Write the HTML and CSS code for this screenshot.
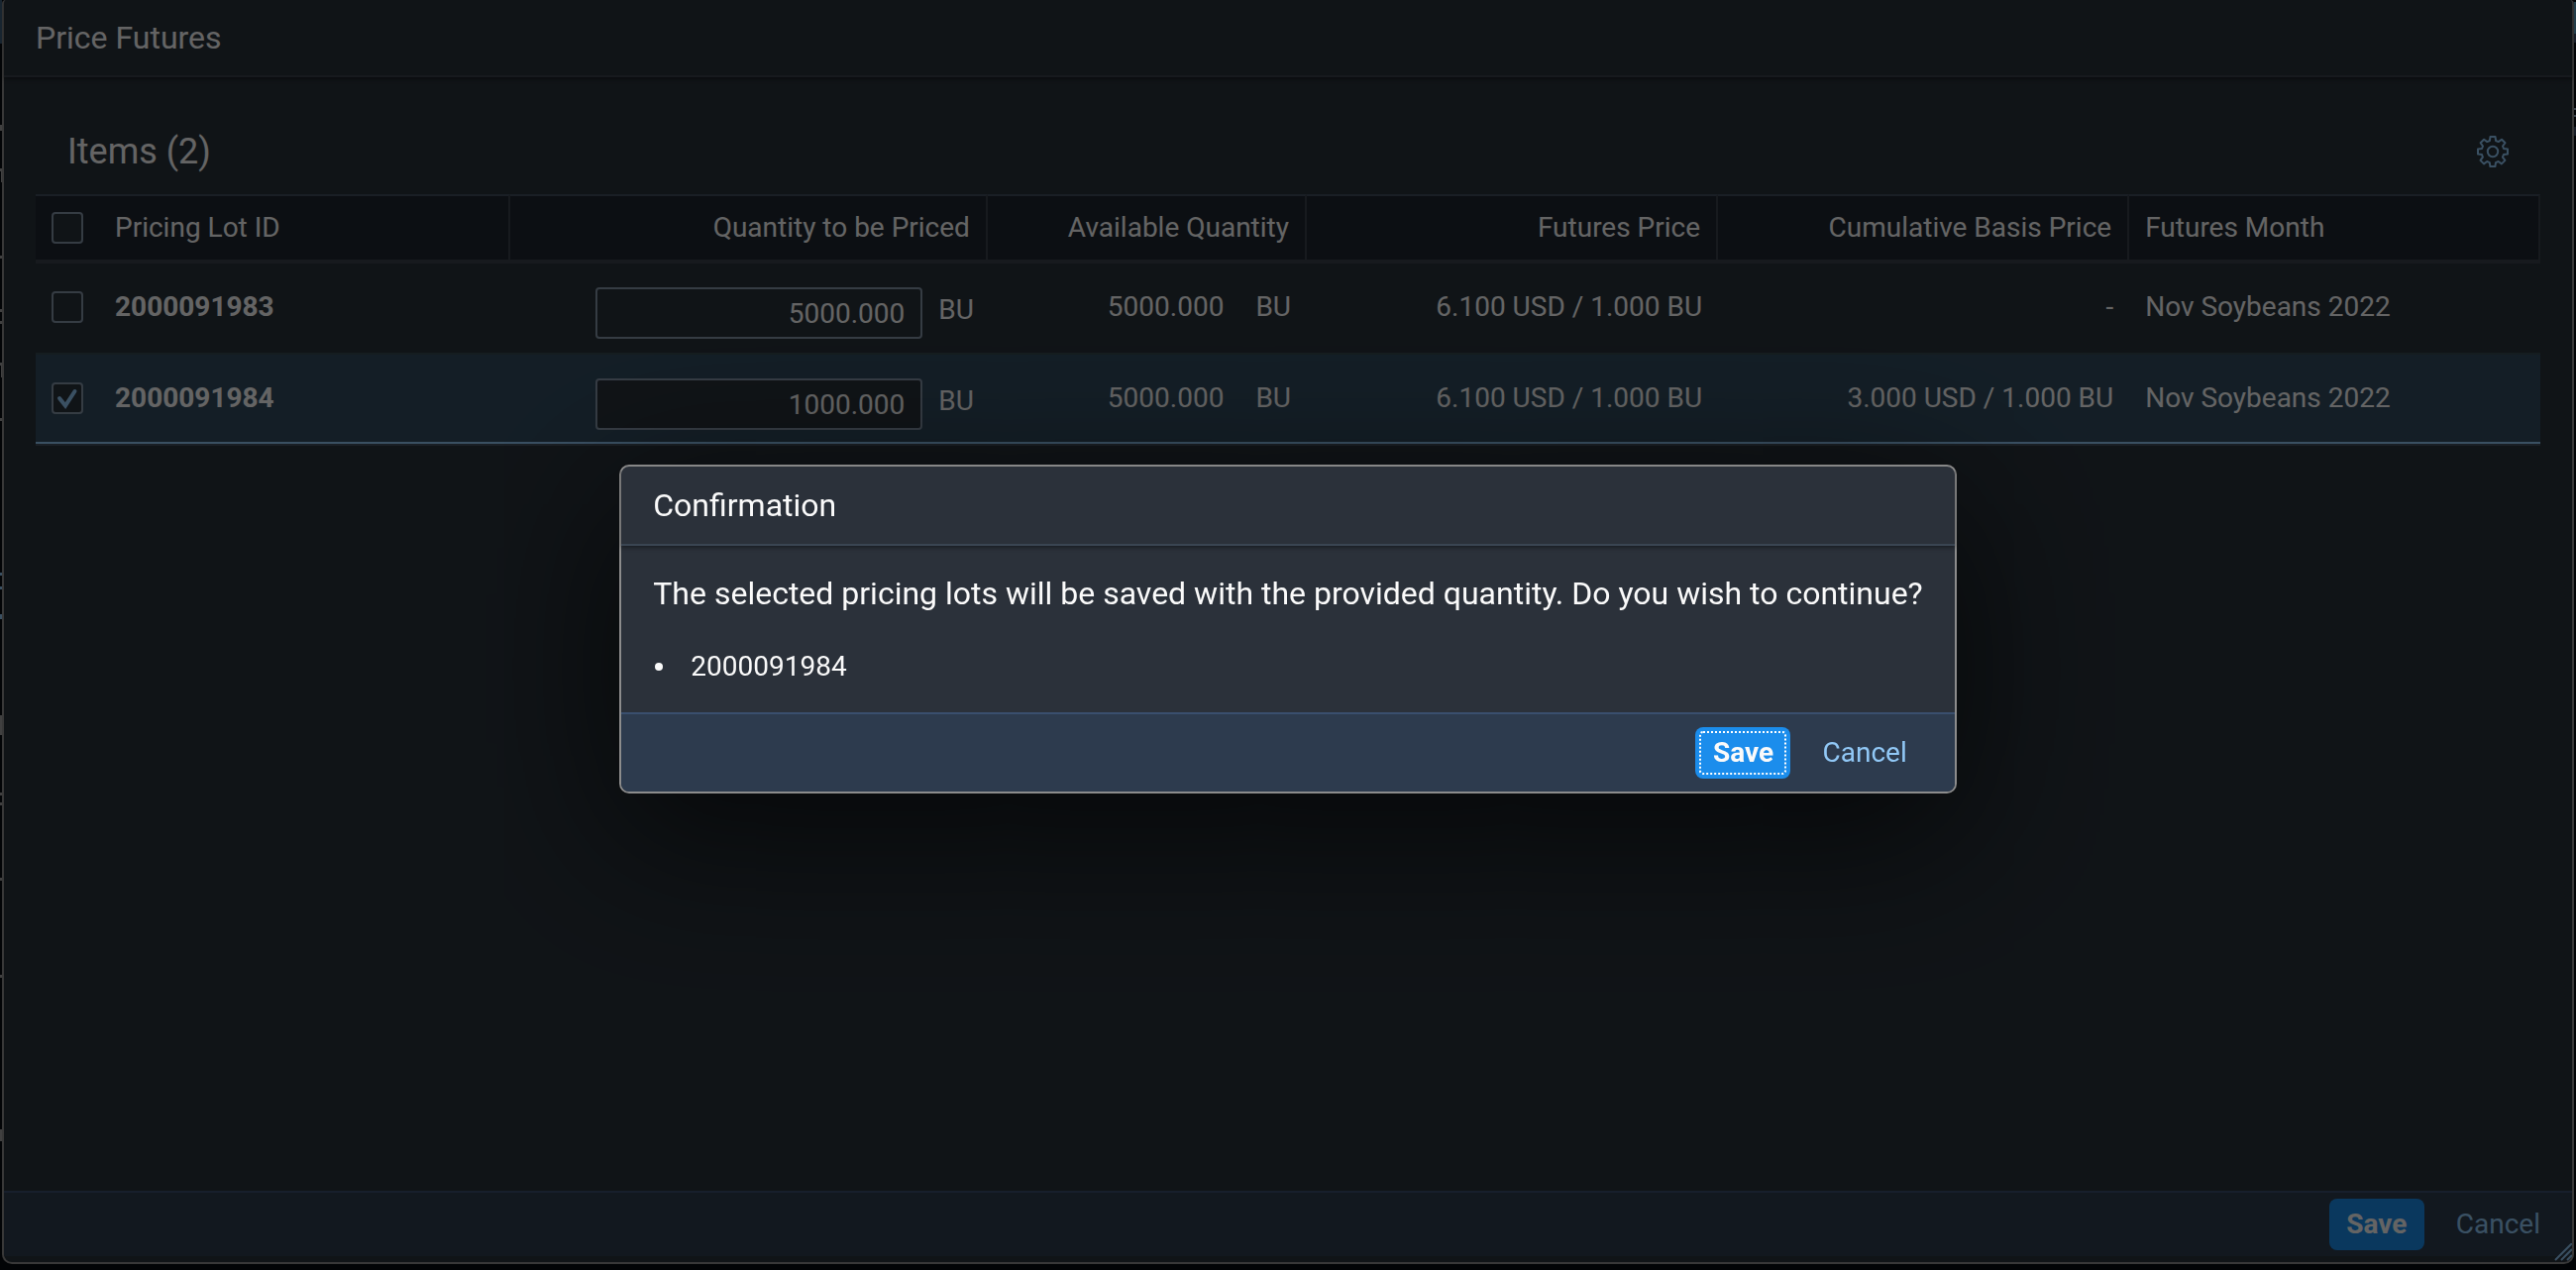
FILE: index.html
```html
<!DOCTYPE html>
<html lang="en">
<head>
<meta charset="utf-8">
<title>Price Futures</title>
<link rel="stylesheet" href="styles.css">
</head>
<body>
<svg class="edge edge-left" viewBox="0 0 2 1282" preserveAspectRatio="none" aria-hidden="true">
  <path fill="#3d5c78" d="M0 0h2v44H0z"/>
  <path fill="#a0a0a0" d="M0 126h2v6H0zM0 170h2v3H0zM1 173h1v11H1zM0 258h2v3H0zM0 312h2v3H0zM0 324h2v3H0zM0 366h2v3H0zM1 369h1v12H1zM0 422h2v3H0zM0 722h2v20H0zM0 800h2v3H0zM0 810h2v3H0zM0 886h2v3H0zM0 984h2v3H0zM0 1140h2v12H0z"/>
  <path fill="#91c8f6" d="M0 578h2v3H0zM0 592h2v3H0zM0 620h2v5H0z"/>
</svg>
<svg class="edge edge-right" viewBox="0 0 2 1282" preserveAspectRatio="none" aria-hidden="true">
  <path fill="#5a9bb8" d="M0 2h2v32H0z"/>
  <path fill="#3d4c64" d="M0 34h2v9H0zM0 128h2v9H0z"/>
  <path fill="#91a8bc" d="M0 109h2v2H0zM0 116h2v2H0z"/>
</svg>

<main class="sheet">
  <header class="sheet-header"><h1>Price Futures</h1></header>

  <section class="sheet-body">
    <div class="toolbar">
      <h2>Items (2)</h2>
      <button class="icon-button" type="button" aria-label="Settings">
        <svg viewBox="0 0 32 32" width="32" height="32" fill="none" stroke="currentColor" stroke-width="2" stroke-linejoin="round">
          <path d="M13.5 1h5l.6 4 2.6 1.100 3.300-2.400 3.500 3.500-2.500 3.300L27 13l4 .6v4.800l-4 .6-1.100 2.600 2.500 3.300-3.500 3.500-3.300-2.400-2.600 1.100-.6 3.900h-5l-.6-3.900-2.600-1.100-3.200 2.400-3.500-3.500 2.400-3.300L5 19l-4-.6v-4.800l4-.6 1-2.500-2.400-3.300L7.100 3.700l3.200 2.400L12.900 5z"/>
          <circle cx="16" cy="16" r="5.200"/>
        </svg>
      </button>
    </div>

    <table class="lots">
      <colgroup>
        <col class="col-select"><col class="col-wide"><col class="col-quantity"><col class="col-available"><col class="col-wide"><col class="col-wide"><col>
      </colgroup>
      <thead>
        <tr>
          <th class="select plain"><span class="tick"><input type="checkbox" aria-label="Select all"></span></th>
          <th scope="col">Pricing Lot ID</th>
          <th scope="col" class="num">Quantity to be Priced</th>
          <th scope="col" class="num">Available Quantity</th>
          <th scope="col" class="num">Futures Price</th>
          <th scope="col" class="num">Cumulative Basis Price</th>
          <th scope="col">Futures Month</th>
        </tr>
      </thead>
      <tbody>
        <tr>
          <td class="select"><span class="tick"><input type="checkbox" aria-label="Select 2000091983"></span></td>
          <td class="lot-id">2000091983</td>
          <td class="entry"><div class="field"><input id="q1" type="text" value="5000.000" aria-label="Quantity to be priced for 2000091983"><label for="q1">BU</label></div></td>
          <td class="num"><div class="measure"><span>5000.000</span><span>BU</span></div></td>
          <td class="num">6.100 USD / 1.000 BU</td>
          <td class="num">-</td>
          <td>Nov Soybeans 2022</td>
        </tr>
        <tr class="selected">
          <td class="select"><span class="tick"><input type="checkbox" checked aria-label="Select 2000091984"><svg viewBox="0 0 32 32" width="32" height="32" aria-hidden="true"><path d="M8 16l6 7.500L23.500 9" fill="none" stroke="currentColor" stroke-width="4" stroke-linecap="round"/></svg></span></td>
          <td class="lot-id">2000091984</td>
          <td class="entry"><div class="field"><input id="q2" type="text" value="1000.000" aria-label="Quantity to be priced for 2000091984"><label for="q2">BU</label></div></td>
          <td class="num"><div class="measure"><span>5000.000</span><span>BU</span></div></td>
          <td class="num">6.100 USD / 1.000 BU</td>
          <td class="num">3.000 USD / 1.000 BU</td>
          <td>Nov Soybeans 2022</td>
        </tr>
      </tbody>
    </table>
  </section>

  <footer class="sheet-footer">
    <button class="button primary" type="button">Save</button>
    <button class="button" type="button">Cancel</button>
    <svg class="grip" viewBox="0 0 18 18" width="18" height="18" fill="none" stroke="currentColor" stroke-width="2" aria-hidden="true"><path d="M1 17L18 0M7 17L18 6M13 17l5-5"/></svg>
  </footer>
</main>

<div class="scrim">
  <section class="confirm" role="dialog" aria-modal="true" aria-labelledby="confirm-title">
    <header class="confirm-header"><h2 id="confirm-title">Confirmation</h2></header>
    <div class="confirm-body">
      <p>The selected pricing lots will be saved with the provided quantity. Do you wish to continue?</p>
      <ul><li>2000091984</li></ul>
    </div>
    <footer class="confirm-footer">
      <button class="button primary focused" type="button">Save</button>
      <button class="button" type="button">Cancel</button>
    </footer>
  </section>
</div>
</body>
</html>
```
FILE: styles.css
```css
:root {
  --surface: #29323a;
  --text: #fafafa;
  --link: #91c8f6;
  --accent: #1b8dec;
  --field-border: #8696a9;
  --line: #3b434d;
  --frame: #8c8c8c;
  --bar: #2d3b4e;
  --bar-line: #3a4f6e;
}

* { box-sizing: border-box; }

body {
  margin: 0;
  min-height: 100vh;
  background: #060b10;
  color: var(--text);
  font-family: Roboto, "Liberation Sans", sans-serif;
  font-size: 28px;
  line-height: 36px;
  overflow: hidden;
}

h1, h2, p, ul { margin: 0; padding: 0; }
h1, h2 { font-size: 32px; font-weight: 400; line-height: 40px; }

.edge { position: absolute; top: 0; width: 2px; height: 100%; }
.edge-left { left: 0; }
.edge-right { right: 0; }

/* Full-screen dialog */
.sheet {
  display: flex;
  flex-direction: column;
  height: calc(100vh - 6px);
  margin: 0 2px;
  padding-bottom: 6px;
  border: 2px solid var(--frame);
  border-top: 0;
  border-radius: 4px 4px 10px 10px;
  background: var(--surface);
}

.sheet-header {
  display: flex;
  align-items: center;
  height: 78px;
  padding: 0 32px;
  border-bottom: 2px solid var(--line);
  box-shadow: 0 2px 4px rgba(0, 0, 0, .4);
}

.sheet-body { flex: 1; padding: 32px 32px 0; }

.toolbar {
  display: flex;
  align-items: center;
  justify-content: space-between;
  height: 86px;
  padding: 0 32px;
}
.toolbar h2 { font-size: 36px; }

.icon-button {
  display: flex;
  padding: 0;
  border: 0;
  background: none;
  color: var(--link);
}

/* Pricing lots */
.lots {
  width: 100%;
  table-layout: fixed;
  border-collapse: separate;
  border-spacing: 0;
  border-bottom: 2px solid #434f5c;
}
.col-select { width: 64px; }
.col-wide { width: 16.42%; }
.col-quantity { width: 19.06%; }
.col-available { width: 12.74%; }

.lots th, .lots td { padding: 0 16px; text-align: left; font-weight: 400; white-space: nowrap; }
.lots th {
  height: 68px;
  background: #202731;
  border: solid var(--line);
  border-width: 2px 2px 2px 0;
  border-top-color: #434f5c;
}
.lots th.plain { border-right: 0; }
.lots td { height: 92px; border: solid transparent; border-width: 2px 0; }
.lots tbody tr:first-child td { border-top-color: var(--line); }
.lots .num { text-align: right; }
.lots .lot-id { font-weight: 700; }
.lots .selected td { background: #324c60; border-top-color: #364a50; border-bottom-color: var(--link); }

.tick { display: grid; width: 32px; height: 32px; }
.tick > * { grid-area: 1 / 1; }
.tick input {
  appearance: none;
  width: 32px;
  height: 32px;
  margin: 0;
  border: 2px solid var(--field-border);
  border-radius: 4px;
  background: var(--surface);
}
.tick svg { color: var(--link); pointer-events: none; }

.lots .entry { padding: 24px 14px 12px 16px; }
.field { display: flex; justify-content: flex-end; gap: 16px; }
.field input {
  width: 330px;
  height: 52px;
  padding: 0 16px;
  border: 2px solid var(--field-border);
  border-radius: 4px;
  background: var(--surface);
  color: inherit;
  font: inherit;
  text-align: right;
}
.field label { line-height: 46px; }

.measure { display: flex; justify-content: flex-end; gap: 32px; }

/* Buttons */
.button {
  height: 52px;
  padding: 0 16px;
  border: 0;
  border-radius: 8px;
  background: none;
  color: var(--link);
  font: inherit;
}
.button.primary {
  min-width: 96px;
  background: var(--accent);
  color: var(--text);
  font-weight: 700;
}
.button.focused { outline: 2px dotted #fff; outline-offset: -6px; }

.sheet-footer {
  position: relative;
  display: flex;
  align-items: center;
  justify-content: flex-end;
  gap: 16px;
  height: 66px;
  padding: 0 16px;
  border-top: 2px solid var(--bar-line);
  background: #2d3e4f;
}
.grip { position: absolute; right: 0; bottom: -5px; color: var(--link); }

/* Confirmation dialog */
.scrim {
  position: fixed;
  inset: 0;
  display: flex;
  align-items: center;
  justify-content: center;
  padding-bottom: 12px;
  background: rgba(0, 0, 0, .6);
}

.confirm {
  border: 2px solid var(--frame);
  border-radius: 10px;
  background: #2b313a;
  box-shadow: 0 40px 160px rgba(0, 0, 0, .7);
}
.confirm-header {
  display: flex;
  align-items: center;
  height: 80px;
  padding: 0 32px;
  border-bottom: 2px solid #3a4552;
  box-shadow: 0 2px 4px rgba(0, 0, 0, .4);
}
.confirm-body { padding: 30px 32px 26px; }
.confirm-body p { font-size: 32px; }
.confirm-body ul { margin-top: 36px; list-style: none; }
.confirm-body li { display: flex; align-items: center; gap: 28px; padding-left: 2px; line-height: 40px; }
.confirm-body li::before { content: ""; width: 8px; height: 8px; border-radius: 50%; background: currentColor; }
.confirm-footer {
  display: flex;
  align-items: center;
  justify-content: flex-end;
  gap: 16px;
  height: 80px;
  padding: 0 32px;
  border-top: 2px solid var(--bar-line);
  border-radius: 0 0 8px 8px;
  background: var(--bar);
}
```
